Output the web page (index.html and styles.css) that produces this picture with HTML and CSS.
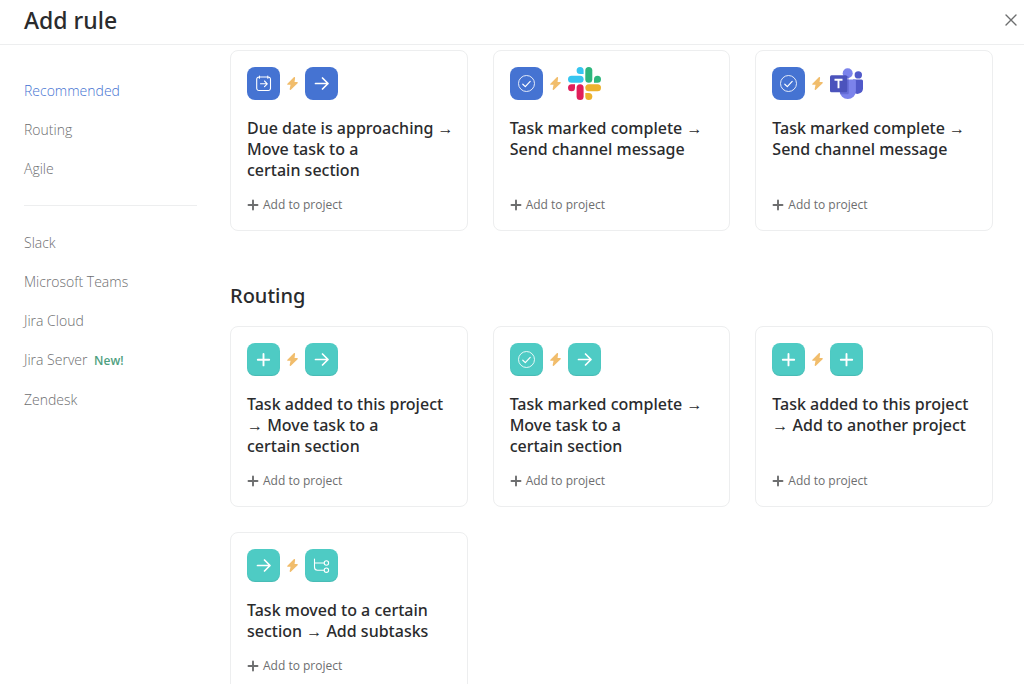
FILE: index.html
```html
<!DOCTYPE html>
<html lang="en">
<head>
    <meta charset="UTF-8">
    <meta name="viewport" content="width=device-width, initial-scale=1.0">
    <title>Add rule</title>
    <link rel="stylesheet" href="styles.css">
</head>
<body>
    <!-- shared icons -->
    <svg class="sprite" width="0" height="0" aria-hidden="true">
        <symbol id="arrow" viewBox="0 0 33 33">
            <path d="M10.500 16.500h12.500M17.500 11l5.500 5.500-5.500 5.500" fill="none" stroke="#fff" stroke-width="1.700" stroke-linecap="round" stroke-linejoin="round"/>
        </symbol>
        <symbol id="plus" viewBox="0 0 33 33">
            <path d="M16.500 11v11.400M10.800 16.700h11.400" fill="none" stroke="#fff" stroke-width="1.900" stroke-linecap="round"/>
        </symbol>
        <symbol id="check" viewBox="0 0 33 33">
            <circle cx="16.500" cy="16.500" r="8" fill="none" stroke="#fff" stroke-opacity=".85" stroke-width="1"/>
            <path d="M12.800 17.200l2.500 2.400 4.900-5.200" fill="none" stroke="#fff" stroke-width="1.200" stroke-linecap="round" stroke-linejoin="round"/>
        </symbol>
        <symbol id="calendar" viewBox="0 0 33 33">
            <g fill="none" stroke="#fff" stroke-width="1.100" stroke-linecap="round" stroke-linejoin="round">
                <path d="M12.400 10h-.4a2.300 2.300 0 0 0-2.300 2.300v8.900a2.300 2.300 0 0 0 2.300 2.300h9.200a2.300 2.300 0 0 0 2.300-2.300v-8.900a2.300 2.300 0 0 0-2.300-2.300h-.4M12.400 10h8.400M12.400 9v2.300M20.800 9v2.300"/>
                <path d="M13.500 16.800h6.600M17.500 14l2.800 2.800-2.800 2.800"/>
            </g>
        </symbol>
        <symbol id="subtask" viewBox="0 0 33 33">
            <g fill="none" stroke="#fff" stroke-width="1.100" stroke-linecap="round">
                <path d="M9.500 10v8.200a3 3 0 0 0 3 3h6.700M9.500 14h9.700"/>
                <circle cx="21.400" cy="14" r="2.200"/>
                <circle cx="21.400" cy="21.200" r="2.200"/>
            </g>
        </symbol>
        <symbol id="bolt" viewBox="0 0 10 12">
            <path d="M6.200.2.300 6.200c-.4.4-.2 1 .4 1h2.500L2.400 11c-.2.800.6 1.200 1.100.7L9.700 5.700c.4-.4.200-1-.4-1H6.900L7.400 1C7.500.1 6.800-.3 6.200.2z" fill="#f1bd6c"/>
        </symbol>
        <symbol id="add" viewBox="0 0 12 12">
            <path d="M6 1.500v9M1.500 6h9" fill="none" stroke="#6d6e6f" stroke-width="1.900" stroke-linecap="round"/>
        </symbol>
    </svg>

    <header class="header">
        <h1>Add rule</h1>
        <button class="close" aria-label="Close">
            <svg width="14" height="14" viewBox="0 0 14 14"><path d="M2 2l10 10M12 2L2 12" stroke="#6d6e6f" stroke-width="1.400" stroke-linecap="round"/></svg>
        </button>
    </header>

    <div class="content">
        <nav class="sidebar">
            <a href="#recommended" class="active">Recommended</a>
            <a href="#routing">Routing</a>
            <a href="#agile">Agile</a>
            <hr>
            <a href="#slack">Slack</a>
            <a href="#teams">Microsoft Teams</a>
            <a href="#jira-cloud">Jira Cloud</a>
            <a href="#jira-server">Jira Server <span class="new">New!</span></a>
            <a href="#zendesk">Zendesk</a>
        </nav>

        <main class="rules">
            <section class="grid" id="recommended">
                <article class="card">
                    <div class="icons">
                        <svg class="tile blue"><use href="#calendar"/></svg>
                        <svg class="bolt"><use href="#bolt"/></svg>
                        <svg class="tile blue"><use href="#arrow"/></svg>
                    </div>
                    <h3>Due date is approaching <span class="to">→</span><br>Move task to a<br>certain section</h3>
                    <button class="add"><svg><use href="#add"/></svg>Add to project</button>
                </article>
                <article class="card">
                    <div class="icons">
                        <svg class="tile blue"><use href="#check"/></svg>
                        <svg class="bolt"><use href="#bolt"/></svg>
                        <svg class="logo" viewBox="0 0 33 33">
                            <g fill="#36c5f0">
                                <path d="M12.100 0a3.500 3.500 0 0 0 0 7h3.500V3.500A3.500 3.500 0 0 0 12.100 0z"/>
                                <rect x="0" y="8.800" width="15.600" height="7" rx="3.500"/>
                            </g>
                            <g fill="#2eb67d">
                                <path d="M33 12.300a3.500 3.500 0 0 0-7 0v3.500h3.500a3.500 3.500 0 0 0 3.500-3.500z"/>
                                <rect x="17.300" y="0" width="7" height="15.800" rx="3.500"/>
                            </g>
                            <g fill="#ecb22e">
                                <path d="M20.800 33a3.500 3.500 0 0 0 0-7h-3.500v3.500a3.500 3.500 0 0 0 3.500 3.500z"/>
                                <rect x="17.300" y="17.300" width="15.700" height="7" rx="3.500"/>
                            </g>
                            <g fill="#e01e5a">
                                <path d="M0 20.800a3.500 3.500 0 0 0 7 0v-3.500H3.500A3.500 3.500 0 0 0 0 20.800z"/>
                                <rect x="8.600" y="17.300" width="7" height="15.700" rx="3.500"/>
                            </g>
                        </svg>
                    </div>
                    <h3>Task marked complete <span class="to">→</span><br>Send channel message</h3>
                    <button class="add"><svg><use href="#add"/></svg>Add to project</button>
                </article>
                <article class="card">
                    <div class="icons">
                        <svg class="tile blue"><use href="#check"/></svg>
                        <svg class="bolt"><use href="#bolt"/></svg>
                        <svg class="logo" viewBox="0 0 33 33">
                            <circle cx="28.300" cy="7.900" r="3.700" fill="#5059c9"/>
                            <path d="M23 12.500h8.500a1.500 1.500 0 0 1 1.500 1.500v7.500a5.500 5.500 0 0 1-10 3z" fill="#5059c9"/>
                            <circle cx="17.700" cy="6.200" r="5" fill="#7b83eb"/>
                            <path d="M10 12.500h14.500a1.400 1.400 0 0 1 1.400 1.400v10a8.100 8.100 0 0 1-16.200 0z" fill="#7b83eb"/>
                            <path d="M9.700 9h7.600a1.500 1.500 0 0 1 1.500 1.500v15.200a1.500 1.500 0 0 1-1.500 1.500h-6.900a9 9 0 0 1-.7-3.300z" fill="#4b53bc" opacity=".45"/>
                            <rect x="0" y="8.200" width="17.200" height="17" rx="1.500" fill="#4b53bc"/>
                            <path d="M4.500 12.700h8M8.500 12.700v8.500" fill="none" stroke="#fff" stroke-width="1.900"/>
                        </svg>
                    </div>
                    <h3>Task marked complete <span class="to">→</span><br>Send channel message</h3>
                    <button class="add"><svg><use href="#add"/></svg>Add to project</button>
                </article>
            </section>

            <h2 id="routing">Routing</h2>
            <section class="grid">
                <article class="card">
                    <div class="icons">
                        <svg class="tile teal"><use href="#plus"/></svg>
                        <svg class="bolt"><use href="#bolt"/></svg>
                        <svg class="tile teal"><use href="#arrow"/></svg>
                    </div>
                    <h3>Task added to this project<br><span class="to">→</span> Move task to a<br>certain section</h3>
                    <button class="add"><svg><use href="#add"/></svg>Add to project</button>
                </article>
                <article class="card">
                    <div class="icons">
                        <svg class="tile teal"><use href="#check"/></svg>
                        <svg class="bolt"><use href="#bolt"/></svg>
                        <svg class="tile teal"><use href="#arrow"/></svg>
                    </div>
                    <h3>Task marked complete <span class="to">→</span><br>Move task to a<br>certain section</h3>
                    <button class="add"><svg><use href="#add"/></svg>Add to project</button>
                </article>
                <article class="card">
                    <div class="icons">
                        <svg class="tile teal"><use href="#plus"/></svg>
                        <svg class="bolt"><use href="#bolt"/></svg>
                        <svg class="tile teal"><use href="#plus"/></svg>
                    </div>
                    <h3>Task added to this project<br><span class="to">→</span> Add to another project</h3>
                    <button class="add"><svg><use href="#add"/></svg>Add to project</button>
                </article>
                <article class="card">
                    <div class="icons">
                        <svg class="tile teal"><use href="#arrow"/></svg>
                        <svg class="bolt"><use href="#bolt"/></svg>
                        <svg class="tile teal"><use href="#subtask"/></svg>
                    </div>
                    <h3>Task moved to a certain<br>section <span class="to">→</span> Add subtasks</h3>
                    <button class="add"><svg><use href="#add"/></svg>Add to project</button>
                </article>
            </section>
        </main>
    </div>
</body>
</html>
```
FILE: styles.css
```css
* {
    box-sizing: border-box;
}
body {
    font-family: 'Noto Sans', 'Open Sans', sans-serif;
    background: #fff;
    color: #2a2b2d;
    display: flex;
    flex-direction: column;
    height: 100vh;
    margin: 0;
}
h1, h2, h3 {
    margin: 0;
}
button {
    font-family: inherit;
    background: none;
    border: none;
    padding: 0;
    cursor: pointer;
}
.sprite {
    position: absolute;
}
.header {
    display: flex;
    justify-content: space-between;
    align-items: center;
    padding: 4px 6px 8px 24px;
    border-bottom: 1px solid #edeeef;
}
.header h1 {
    font-size: 23px;
    font-weight: 550;
    line-height: 32px;
}
.close {
    display: flex;
}
.content {
    display: flex;
    flex: 1;
    min-height: 0;
}
.sidebar {
    display: flex;
    flex-direction: column;
    flex: 0 0 197px;
    padding: 26px 0 0 24px;
}
.sidebar a {
    font-family: 'Open Sans', sans-serif;
    color: #6d6e6f;
    font-size: 14px;
    font-weight: 350;
    line-height: 39px;
    text-decoration: none;
}
.sidebar a.active {
    color: #4573d2;
}
.sidebar hr {
    width: 100%;
    border: none;
    border-top: 1px solid #edeeef;
    margin: 17px 0;
}
.new {
    color: #4f9f7f;
    font-size: 12px;
    font-weight: 600;
    margin-left: 3px;
}
.rules {
    flex: 1;
    overflow-y: auto;
    scrollbar-width: none;
    padding: 5px 31px 24px 33px;
}
.rules h2 {
    font-size: 20px;
    font-weight: 500;
    line-height: 28px;
    margin: 51px 0 16px;
}
.grid {
    display: grid;
    grid-template-columns: repeat(3, minmax(0, 1fr));
    gap: 25px;
}
.card {
    display: flex;
    flex-direction: column;
    align-items: flex-start;
    border: 1px solid #edeeef;
    border-radius: 8px;
    padding: 16px;
}
.icons {
    display: flex;
    align-items: center;
    margin-bottom: 18px;
}
.tile, .logo {
    width: 33px;
    height: 33px;
}
.tile {
    border-radius: 8px;
}
.tile.blue { background: #4573d2; }
.tile.teal {
    background: #4ecbc4;
    box-shadow: inset 0 -1px 1px rgba(0, 0, 0, 0.08);
}
.bolt {
    width: 11px;
    height: 13px;
    margin: 0 7px;
}
.card h3 {
    font-size: 16px;
    font-weight: 500;
    line-height: 21px;
    margin-bottom: 15px;
    white-space: nowrap;
}
.to {
    font-family: 'Liberation Sans', sans-serif;
    font-weight: 400;
    line-height: 1;
}
.add {
    font-family: 'Open Sans', sans-serif;
    display: flex;
    align-items: center;
    gap: 4px;
    color: #6d6e6f;
    font-size: 12px;
    line-height: 18px;
    margin-top: auto;
}
.add svg {
    width: 12px;
    height: 12px;
}
```
